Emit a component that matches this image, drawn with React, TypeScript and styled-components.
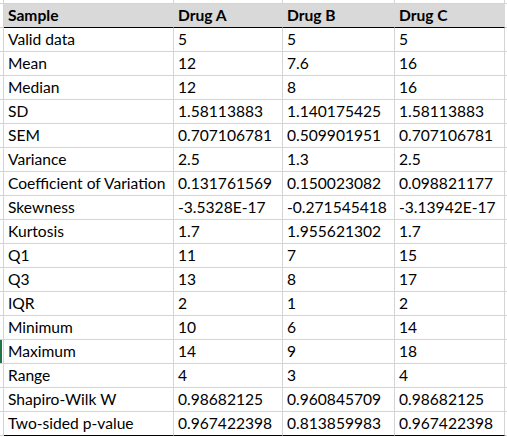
import React from "react";
import styled, { createGlobalStyle } from "styled-components";

const GlobalStyle = createGlobalStyle`
  html, body { margin: 0; padding: 0; background: #ffffff; }
  body { font-family: Lato, "Open Sans", sans-serif; }
`;

const GRID = "#d4d4d4";
const COLS = "4px 170px 109px 112px 110px 2px";

const Sheet = styled.div`
  display: flex;
  flex-direction: column;
  width: 507px;
  height: 437px;
  overflow: hidden;
  background: #fff;
`;

const Row = styled.div<{ $h: number }>`
  display: grid;
  grid-template-columns: ${COLS};
  height: ${(p) => p.$h}px;
`;

const Gutter = styled.div<{ $marked?: boolean }>`
  box-sizing: border-box;
  border-right: 1px solid ${GRID};
  border-bottom: 1px solid ${GRID};
  position: relative;
  ${(p) =>
    p.$marked
      ? `&::before { content: ""; position: absolute; left: 0; top: 0; bottom: 0; width: 2px; background: #217346; }`
      : ""}
`;

const Tail = styled.div`
  box-sizing: border-box;
  border-bottom: 1px solid ${GRID};
`;

const Blank = styled.div`
  box-sizing: border-box;
  border-right: 1px solid ${GRID};
  border-bottom: 1px solid ${GRID};
`;

const Cell = styled.div<{ $header?: boolean; $last?: boolean }>`
  box-sizing: border-box;
  padding-left: 4px;
  font-family: Lato, "Open Sans", sans-serif;
  font-size: 15.6px;
  line-height: 23px;
  color: #000;
  white-space: nowrap;
  overflow: hidden;
  font-weight: ${(p) => (p.$header ? 700 : 400)};
  background: ${(p) => (p.$header ? "#d9d9d9" : "#fff")};
  border-right: 1px solid ${(p) => (p.$header ? "#d9d9d9" : GRID)};
  border-bottom: 1px solid ${(p) => (p.$header || p.$last ? "#000" : GRID)};
`;

const header = ["Sample", "Drug A", "Drug B", "Drug C"];

const rows: string[][] = [
  ["Valid data", "5", "5", "5"],
  ["Mean", "12", "7.6", "16"],
  ["Median", "12", "8", "16"],
  ["SD", "1.58113883", "1.140175425", "1.58113883"],
  ["SEM", "0.707106781", "0.509901951", "0.707106781"],
  ["Variance", "2.5", "1.3", "2.5"],
  ["Coefficient of Variation", "0.131761569", "0.150023082", "0.098821177"],
  ["Skewness", "-3.5328E-17", "-0.271545418", "-3.13942E-17"],
  ["Kurtosis", "1.7", "1.955621302", "1.7"],
  ["Q1", "11", "7", "15"],
  ["Q3", "13", "8", "17"],
  ["IQR", "2", "1", "2"],
  ["Minimum", "10", "6", "14"],
  ["Maximum", "14", "9", "18"],
  ["Range", "4", "3", "4"],
  ["Shapiro-Wilk W", "0.98682125", "0.960845709", "0.98682125"],
  ["Two-sided p-value", "0.967422398", "0.813859983", "0.967422398"],
];

export default function App() {
  return (
    <>
      <GlobalStyle />
      <Sheet>
        <Row $h={4}>
          <Gutter />
          <Blank />
          <Blank />
          <Blank />
          <Blank />
          <Tail />
        </Row>
        <Row $h={24}>
          <Gutter />
          {header.map((h) => (
            <Cell key={h} $header>
              {h}
            </Cell>
          ))}
          <Tail />
        </Row>
        {rows.map((r, i) => (
          <Row $h={24} key={r[0]}>
            <Gutter $marked={r[0] === "Maximum"} />
            {r.map((v, j) => (
              <Cell key={j} $last={i === rows.length - 1}>
                {v}
              </Cell>
            ))}
            <Tail />
          </Row>
        ))}
      </Sheet>
    </>
  );
}
